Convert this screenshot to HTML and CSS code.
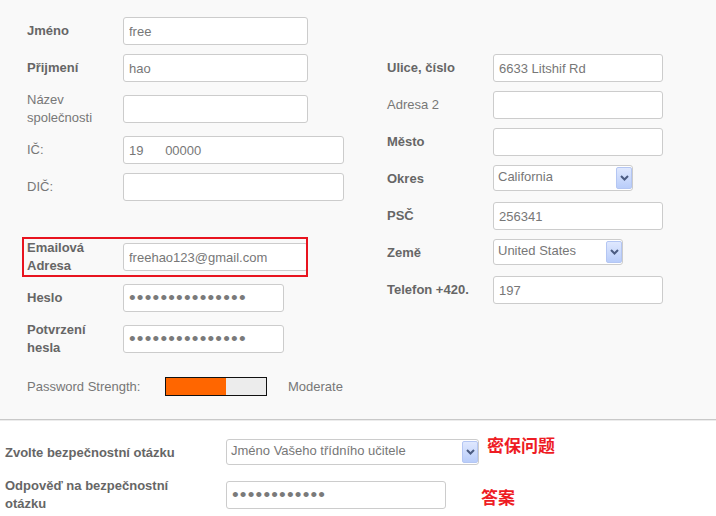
FILE: index.html
```html
<!DOCTYPE html>
<html lang="cs">
<head>
<meta charset="utf-8">
<title>Registrace</title>
<link rel="stylesheet" href="styles.css">
</head>
<body>
<div class="top">
  <div class="col col-left">
    <div class="row"><label class="lbl b">Jméno</label><input class="inp w185" type="text" value="free"></div>
    <div class="row"><label class="lbl b">Přijmení</label><input class="inp w185" type="text" value="hao"></div>
    <div class="row"><label class="lbl">Název<br>společnosti</label><input class="inp w185" type="text" value=""></div>
    <div class="row"><label class="lbl">IČ:</label><input class="inp w221" type="text" value="19      00000"></div>
    <div class="row"><label class="lbl">DIČ:</label><input class="inp w221" type="text" value=""></div>
    <div class="row row-email"><label class="lbl b">Emailová<br>Adresa</label><input class="inp w185" type="text" value="freehao123@gmail.com"></div>
    <div class="row"><label class="lbl b">Heslo</label><input class="inp w161 pw" type="password" value="xxxxxxxxxxxxxxx"></div>
    <div class="row"><label class="lbl b">Potvrzení<br>hesla</label><input class="inp w161 pw" type="password" value="xxxxxxxxxxxxxxx"></div>
    <div class="strength">
      <span class="strength-label">Password Strength:</span>
      <span class="meter"><span class="meter-fill"></span></span>
      <span class="strength-text">Moderate</span>
    </div>
  </div>
  <div class="col col-right">
    <div class="row"><label class="lbl lbl-r b">Ulice, číslo</label><input class="inp w170" type="text" value="6633 Litshif Rd"></div>
    <div class="row"><label class="lbl lbl-r">Adresa 2</label><input class="inp w170" type="text" value=""></div>
    <div class="row"><label class="lbl lbl-r b">Město</label><input class="inp w170" type="text" value=""></div>
    <div class="row"><label class="lbl lbl-r b">Okres</label>
      <div class="select w140"><span class="select-text">California</span><span class="select-btn"><svg width="9" height="6" viewBox="0 0 9 6"><path d="M1 1 L4.5 4.5 L8 1" fill="none" stroke="#4b5c82" stroke-width="2"/></svg></span></div>
    </div>
    <div class="row"><label class="lbl lbl-r b">PSČ</label><input class="inp w170" type="text" value="256341"></div>
    <div class="row"><label class="lbl lbl-r b">Země</label>
      <div class="select w130"><span class="select-text">United States</span><span class="select-btn"><svg width="9" height="6" viewBox="0 0 9 6"><path d="M1 1 L4.5 4.5 L8 1" fill="none" stroke="#4b5c82" stroke-width="2"/></svg></span></div>
    </div>
    <div class="row"><label class="lbl lbl-r b">Telefon +420.</label><input class="inp w170" type="text" value="197"></div>
  </div>
</div>
<div class="security">
  <div class="srow">
    <label class="slbl">Zvolte bezpečnostní otázku</label>
    <div class="select w253"><span class="select-text">Jméno Vašeho třídního učitele</span><span class="select-btn"><svg width="9" height="6" viewBox="0 0 9 6"><path d="M1 1 L4.5 4.5 L8 1" fill="none" stroke="#4b5c82" stroke-width="2"/></svg></span></div>
    <span class="note note-q">密保问题</span>
  </div>
  <div class="srow">
    <label class="slbl">Odpověď na bezpečnostní<br>otázku</label>
    <input class="inp w220 pw" type="password" value="xxxxxxxxxxxx">
    <span class="note note-a">答案</span>
  </div>
</div>
</body>
</html>
```
FILE: styles.css
```css
html, body {
  margin: 0;
  padding: 0;
  background: #ffffff;
}
body {
  font-family: "Liberation Sans", Arial, sans-serif;
  font-size: 13px;
  color: #666;
  width: 716px;
  height: 516px;
  overflow: hidden;
}
.top {
  display: flex;
  background: #f9f9f9;
  border-bottom: 1px solid #c9c9c9;
  box-shadow: 0 1px 0 #ececec;
  padding: 17px 0 0 27px;
  height: 402px;
}
.col-left {
  width: 360px;
}
.col-right {
  padding-top: 37px;
}
.row {
  display: flex;
  align-items: center;
  margin-bottom: 9px;
  position: relative;
}
.row-email {
  margin-top: 38px;
}
.row-email::before {
  content: "";
  position: absolute;
  left: -5px;
  top: -2px;
  width: 286px;
  height: 40px;
  box-sizing: border-box;
  border: 2px solid #e8141f;
  z-index: 2;
  pointer-events: none;
}
.lbl {
  width: 96px;
  flex: none;
  line-height: 18px;
  color: #777;
}
.lbl-r {
  width: 106px;
}
.b {
  font-weight: bold;
  color: #666;
}
.inp {
  box-sizing: border-box;
  height: 28px;
  border: 1px solid #cccccc;
  border-radius: 3px;
  background: #fff;
  padding: 0 5px;
  margin: 0;
  font-family: "Liberation Sans", Arial, sans-serif;
  font-size: 13px;
  color: #777;
  outline: none;
}
.pw {
  font-size: 19px;
  letter-spacing: 1.2px;
  color: #7a7a7a;
}
.w185 { width: 185px; }
.w221 { width: 221px; }
.w161 { width: 161px; }
.w170 { width: 170px; }
.w220 { width: 220px; }
.w140 { width: 140px; }
.w130 { width: 130px; }
.w253 { width: 253px; }
.select {
  box-sizing: border-box;
  height: 26px;
  border: 1px solid #cccccc;
  border-radius: 3px;
  background: #fff;
  display: flex;
  justify-content: space-between;
  color: #777;
  margin-bottom: 2px;
}
.select-text {
  padding: 3px 0 0 4px;
  line-height: 15px;
  white-space: nowrap;
  overflow: hidden;
}
.select-btn {
  flex: none;
  width: 16px;
  height: 22px;
  margin: 1px 0 1px 0;
  box-sizing: border-box;
  border: 1px solid #b4c6f3;
  border-radius: 2px;
  background: linear-gradient(#dfe8fe, #b9cdfa);
  display: flex;
  align-items: center;
  justify-content: center;
}
.strength {
  display: flex;
  align-items: center;
  margin-top: 20px;
  color: #777;
}
.strength-label {
  width: 138px;
}
.meter {
  box-sizing: border-box;
  width: 102px;
  height: 19px;
  border: 1px solid #111;
  background: #ececec;
  display: block;
}
.meter-fill {
  display: block;
  width: 60px;
  height: 100%;
  background: #ff6600;
}
.strength-text {
  margin-left: 21px;
}
.security {
  padding: 19px 0 0 5px;
}
.srow {
  display: flex;
  align-items: center;
  margin-bottom: 10px;
}
.slbl {
  width: 221px;
  flex: none;
  font-weight: bold;
  color: #666;
  line-height: 18px;
}
.note {
  font-family: "Noto Sans CJK SC", sans-serif;
  font-weight: bold;
  color: #ee1c24;
  font-size: 17px;
  line-height: 20px;
}
.note-q {
  margin-left: 8px;
  align-self: flex-start;
  margin-top: -4px;
}
.note-a {
  margin-left: 35px;
  margin-top: 3px;
}
```
